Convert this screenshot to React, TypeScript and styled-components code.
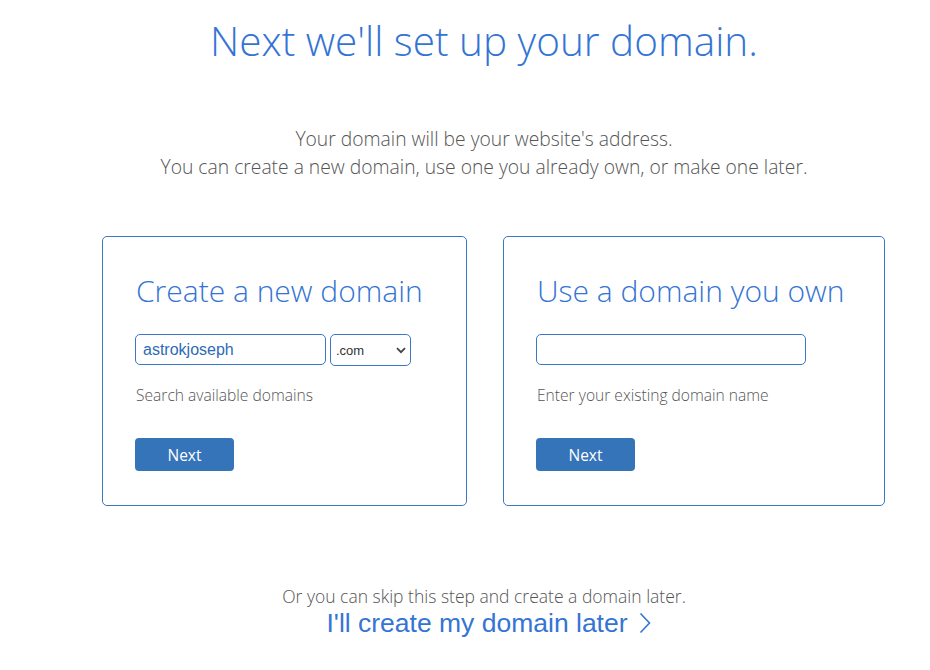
import React from "react";
import styled, { createGlobalStyle } from "styled-components";

const GlobalStyle = createGlobalStyle`
  html, body { margin: 0; padding: 0; background: #ffffff; }
  body { font-family: "Open Sans", "Liberation Sans", sans-serif; }
`;

const Page = styled.div`
  width: 930px;
  box-sizing: border-box;
  padding: 14px 0 0 38px;
  display: flex;
  flex-direction: column;
  align-items: center;
`;

const Title = styled.h1`
  margin: 0;
  font-family: "Open Sans", sans-serif;
  font-weight: 300;
  font-size: 40.5px;
  line-height: 54px;
  color: #3474d4;
`;

const Intro = styled.p`
  margin: 57px 0 0;
  text-align: center;
  font-family: "Open Sans", sans-serif;
  font-weight: 300;
  font-size: 19.3px;
  line-height: 28px;
  color: #555555;
`;

const Cards = styled.div`
  align-self: flex-start;
  display: flex;
  gap: 36px;
  margin: 55px 0 0 64px;
`;

const Card = styled.section<{ $w: number }>`
  width: ${(p) => p.$w}px;
  height: 270px;
  box-sizing: border-box;
  border: 1px solid #3b77c6;
  border-radius: 5px;
  padding: 34px 20px 0 32px;
  display: flex;
  flex-direction: column;
`;

const CardTitle = styled.h2`
  margin: 0 0 0 1px;
  font-family: "Open Sans", sans-serif;
  font-weight: 300;
  font-size: 30px;
  line-height: 40px;
  color: #3474d4;
`;

const FieldRow = styled.div`
  display: flex;
  gap: 4px;
  margin-top: 23px;
  height: 32px;
`;

const TextInput = styled.input<{ $w: number }>`
  width: ${(p) => p.$w}px;
  height: 31px;
  box-sizing: border-box;
  border: 1px solid #3b77c6;
  border-radius: 5px;
  padding: 0 7px;
  font-family: "Liberation Sans", Arial, sans-serif;
  font-size: 16px;
  color: #2e6ab8;
  outline: none;
  background: #fff;
`;

const SelectBox = styled.div`
  position: relative;
  width: 81px;
  height: 32px;
  box-sizing: border-box;
  border: 1px solid #3b77c6;
  border-radius: 5px;
  display: flex;
  align-items: center;
  padding: 0 0 0 5px;
  font-family: "Liberation Sans", Arial, sans-serif;
  font-size: 13px;
  color: #333;
`;

const Chevron = styled.svg`
  position: absolute;
  right: 4px;
  top: 12px;
`;

const Help = styled.p`
  margin: 18px 0 0 1px;
  font-family: "Open Sans", sans-serif;
  font-weight: 300;
  font-size: 15.6px;
  line-height: 22px;
  color: #555555;
`;

const Button = styled.button`
  margin-top: 32px;
  width: 99px;
  height: 33px;
  border: none;
  border-radius: 4px;
  background: #3674b9;
  color: #ffffff;
  font-family: "Open Sans", sans-serif;
  font-size: 15.5px;
  padding: 0;
  cursor: pointer;
`;

const Skip = styled.p`
  margin: 79px 0 0;
  font-family: "Open Sans", sans-serif;
  font-weight: 300;
  font-size: 17.5px;
  line-height: 22px;
  color: #555555;
`;

const LaterLink = styled.a`
  display: flex;
  align-items: center;
  gap: 11px;
  margin-left: 9px;
  font-family: "Liberation Sans", Arial, sans-serif;
  font-size: 26.5px;
  line-height: 32px;
  color: #3474d4;
  text-decoration: none;
`;

export default function App() {
  return (
    <>
      <GlobalStyle />
      <Page>
        <Title>Next we'll set up your domain.</Title>
        <Intro>
          Your domain will be your website's address.
          <br />
          You can create a new domain, use one you already own, or make one later.
        </Intro>
        <Cards>
          <Card $w={365}>
            <CardTitle>Create a new domain</CardTitle>
            <FieldRow>
              <TextInput $w={191} defaultValue="astrokjoseph" />
              <SelectBox>
                .com
                <Chevron width="10" height="7" viewBox="0 0 10 7">
                  <path d="M1 1.2 L5 5.2 L9 1.2" fill="none" stroke="#444" strokeWidth="1.8" />
                </Chevron>
              </SelectBox>
            </FieldRow>
            <Help>Search available domains</Help>
            <Button>Next</Button>
          </Card>
          <Card $w={382}>
            <CardTitle>Use a domain you own</CardTitle>
            <FieldRow>
              <TextInput $w={270} />
            </FieldRow>
            <Help>Enter your existing domain name</Help>
            <Button>Next</Button>
          </Card>
        </Cards>
        <Skip>Or you can skip this step and create a domain later.</Skip>
        <LaterLink href="#">
          I'll create my domain later
          <svg width="12" height="22" viewBox="0 0 12 22">
            <path d="M1.5 1.5 L10.5 11 L1.5 20.5" fill="none" stroke="#3474d4" strokeWidth="1.6" />
          </svg>
        </LaterLink>
      </Page>
    </>
  );
}
